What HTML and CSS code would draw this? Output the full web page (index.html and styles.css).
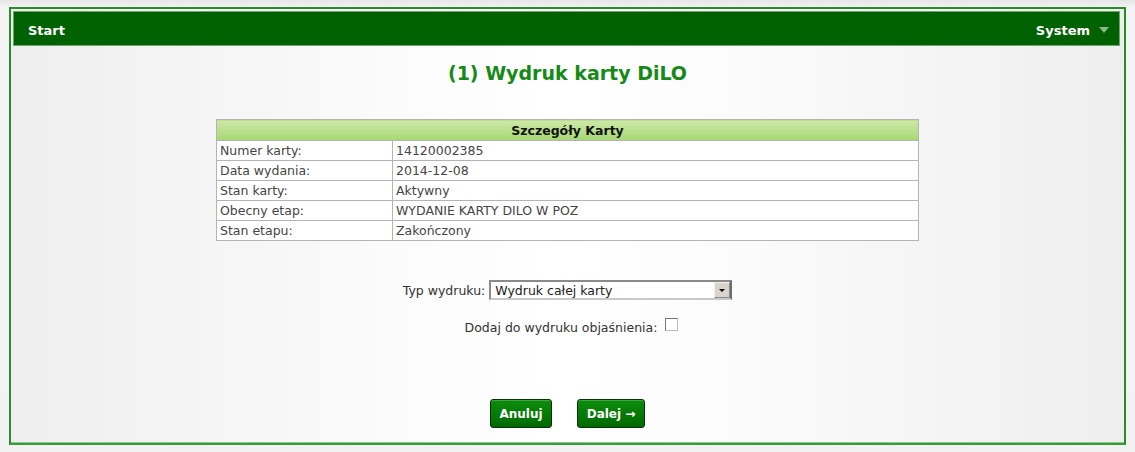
FILE: index.html
```html
<!DOCTYPE html>
<html lang="pl">
<head>
<meta charset="utf-8">
<title>Wydruk karty DiLO</title>
<link rel="stylesheet" href="styles.css">
</head>
<body>
<div class="frame">
  <div class="topbar">
    <span class="nav-item">Start</span>
    <span class="nav-item system">System <span class="caret"></span></span>
  </div>
  <h1 class="title">(1) Wydruk karty DiLO</h1>
  <table class="details">
    <thead>
      <tr><th colspan="2">Szczegóły Karty</th></tr>
    </thead>
    <tbody>
      <tr><td class="key">Numer karty:</td><td>14120002385</td></tr>
      <tr><td class="key">Data wydania:</td><td>2014-12-08</td></tr>
      <tr><td class="key">Stan karty:</td><td>Aktywny</td></tr>
      <tr><td class="key">Obecny etap:</td><td>WYDANIE KARTY DILO W POZ</td></tr>
      <tr><td class="key">Stan etapu:</td><td>Zakończony</td></tr>
    </tbody>
  </table>
  <div class="form-row">
    <span class="label">Typ wydruku:</span>
    <div class="select">
      <span class="select-value">Wydruk całej karty</span>
      <span class="select-btn"><span class="tri"></span></span>
    </div>
  </div>
  <div class="form-row check-row">
    <span class="label">Dodaj do wydruku objaśnienia:</span>
    <span class="checkbox"></span>
  </div>
  <div class="buttons">
    <button class="btn btn-cancel">Anuluj</button>
    <button class="btn btn-next">Dalej →</button>
  </div>
</div>
</body>
</html>
```
FILE: styles.css
```css
html, body {
  margin: 0;
  padding: 0;
}
body {
  background: linear-gradient(to bottom, #e6e6e6, #f4f4f4 8px, #f2f2f2);
  font-family: "DejaVu Sans", Verdana, sans-serif;
  padding: 7px 9px 7px 9px;
  width: 1117px;
  box-sizing: content-box;
}
.frame {
  box-sizing: border-box;
  width: 1117px;
  height: 438px;
  border: 2px solid #2c8a2c;
  border-bottom-color: #3a9a3a;
  box-shadow: inset 0 -1px 0 #8cc88c;
  padding: 2px;
  background: linear-gradient(to right, #eeeeee, #fbfbfb 35%, #ffffff 50%, #fbfbfb 65%, #eeeeee);
  display: flex;
  flex-direction: column;
  align-items: center;
}
.topbar {
  align-self: stretch;
  margin-right: 2px;
  height: 35px;
  box-sizing: border-box;
  background: #006100;
  border: 1px solid #6aa86a;
  display: flex;
  justify-content: space-between;
  align-items: center;
  padding: 3px 10px 0 14px;
  color: #ffffff;
  font-weight: bold;
  font-size: 13px;
}
.nav-item {
  display: flex;
  align-items: center;
}
.caret {
  display: inline-block;
  width: 0;
  height: 0;
  margin-left: 9px;
  border-left: 5px solid transparent;
  border-right: 5px solid transparent;
  border-top: 6px solid #8ab88a;
}
.title {
  margin: 16px 0 0 0;
  font-size: 19px;
  line-height: 22px;
  color: #168a16;
  font-weight: bold;
}
.details {
  margin-top: 35px;
  width: 703px;
  border-collapse: collapse;
  border: 1px solid #b4b4b4;
  font-size: 12.5px;
  background: #ffffff;
}
.details th {
  height: 20px;
  padding: 0;
  background: linear-gradient(to bottom, #cde8a8, #a6d872);
  color: #111111;
  font-weight: bold;
  font-size: 12.5px;
  text-align: center;
  border-bottom: 1px solid #b4b4b4;
}
.details td {
  height: 19px;
  padding: 0 3px;
  color: #454545;
  border-bottom: 1px solid #b4b4b4;
  line-height: 19px;
}
.details td.key {
  width: 169px;
  border-right: 1px solid #b4b4b4;
}
.form-row {
  display: flex;
  align-items: center;
  font-size: 12.5px;
  color: #333333;
  margin-top: 39px;
  padding-right: 0;
}
.label {
  margin-right: 4px;
}
.select {
  box-sizing: border-box;
  width: 243px;
  height: 20px;
  border: 2px solid #8a8a8a;
  border-right-color: #6e6e6e;
  border-bottom-color: #c8c8c8;
  background: #ffffff;
  display: flex;
  align-items: center;
  justify-content: space-between;
  padding-left: 4px;
  color: #222222;
}
.select-btn {
  box-sizing: border-box;
  width: 16px;
  height: 16px;
  background: #d8d4cc;
  border: 1px solid #f4f2ee;
  border-right-color: #8a8a8a;
  border-bottom-color: #8a8a8a;
  display: flex;
  align-items: center;
  justify-content: center;
}
.tri {
  width: 0;
  height: 0;
  border-left: 3px solid transparent;
  border-right: 3px solid transparent;
  border-top: 3px solid #000000;
}
.check-row {
  margin-top: 20px;
  padding-left: 8px;
}
.checkbox {
  display: inline-block;
  box-sizing: border-box;
  width: 13px;
  height: 13px;
  border: 1px solid #777777;
  border-right-color: #bbbbbb;
  border-bottom-color: #bbbbbb;
  background: #ffffff;
  margin-left: 4px;
  margin-top: -6px;
}
.buttons {
  margin-top: 64px;
  display: flex;
  gap: 25px;
}
.btn {
  height: 29px;
  box-sizing: border-box;
  border: 1px solid #0b2e0b;
  border-radius: 3px;
  background: linear-gradient(to bottom, #0c8c0c, #006a00);
  color: #ffffff;
  font-family: "DejaVu Sans", Verdana, sans-serif;
  font-weight: bold;
  font-size: 12px;
  padding: 0;
  box-shadow: inset 0 1px 0 #3aa83a;
}
.btn-cancel { width: 62px; }
.btn-next { width: 68px; }
```
